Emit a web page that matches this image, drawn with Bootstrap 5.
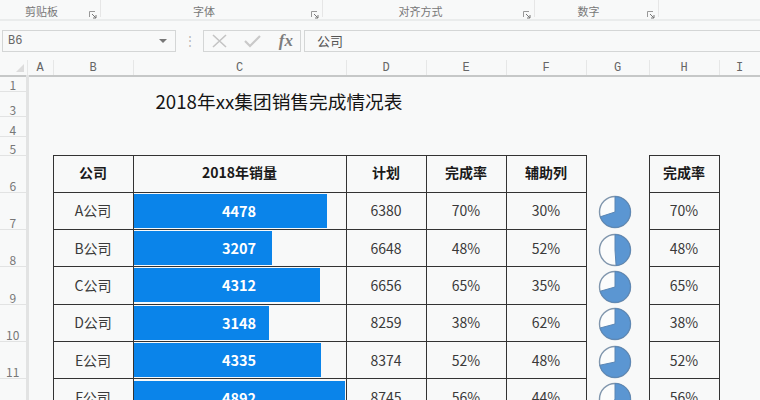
<!DOCTYPE html>
<html lang="zh-CN">
<head>
  <meta charset="UTF-8">
  <meta name="viewport" content="width=device-width, initial-scale=1.0">
  <title>2018年xx集团销售完成情况表</title>
  <link href="https://cdn.jsdelivr.net/npm/bootstrap@5.3.0/dist/css/bootstrap.min.css" rel="stylesheet">
  <style>
    html, body { height: 400px; overflow: hidden; }
    body { background: #f8f9f9; color: #3a3a3a; font-family: "Noto Sans CJK SC", "Liberation Sans", sans-serif; font-size: 14px; }
    .ribbon { height: 21px; border-bottom: 2px solid #eaecec; }
    .rib-group { position: relative; height: 17px; border-right: 1px solid #e6e6e6; font-size: 11px; line-height: 22px; color: #777; text-align: center; }
    .rib-group svg { position: absolute; right: 3px; top: 11px; }
    .rib-1 { width: 101px; padding-right: 17px; }
    .rib-2 { width: 222px; padding-right: 15px; }
    .rib-3 { width: 212px; padding-right: 16px; }
    .rib-4 { width: 124px; padding-right: 16px; }
    .fbar { height: 22px; margin-top: 9px; margin-bottom: 8px; }
    .name-box { width: 174px; margin-left: 2px; border: 1px solid #d4d6d6; font: 12px/20px "Liberation Mono", monospace; color: #666; padding: 0 5px; }
    .name-box svg { margin-right: 3px; }
    .fbar-dots { width: 27px; color: #b5b5b5; font-size: 12px; line-height: 20px; text-align: center; }
    .fbar-btns { width: 98px; border: 1px solid #d4d6d6; padding: 0 7px 0 8px; }
    .fx-mark { font: italic bold 17px/20px "Liberation Serif", serif; color: #7d7d7d; }
    .fbar-input { margin-left: 3px; border: 1px solid #d4d6d6; border-right: 0; padding-left: 12px; font-size: 13px; line-height: 19px; color: #555; }
    .sheet { table-layout: fixed; width: 760px; }
    .sheet td, .sheet th { padding: 0; text-align: center; vertical-align: middle; font-weight: 400; overflow: visible; white-space: nowrap; }
    .sheet .col-head th { height: 16px; font: 12px/13px "Liberation Mono", monospace; color: #666; border-bottom: 2px solid #c6c8c8; border-right: 1px solid #e6e7e7; vertical-align: bottom; }
    .col-head .corner { position: relative; }
    .corner svg { position: absolute; left: 16px; top: 4px; }
    .sheet .row-no { font-size: 12px; line-height: 13px; color: #777; border-bottom: 1px solid #e2e3e3; border-right: 3px solid #e2e3e3; vertical-align: bottom; }
    .h-1 { height: 15px; } .h-3 { height: 25px; } .h-4 { height: 20px; } .h-5 { height: 19px; } .h-6 { height: 37px; } .h-7 { height: 37.4px; }
    .sheet .title-cell { font-size: 18.7px; line-height: 20px; color: #151515; text-align: left; padding: 0 0 5px 127px; }
    .sheet td.box, .sheet th.box { border: 1px solid #333; }
    .sheet th.box { font-weight: 700; color: #1a1a1a; font-size: 14px; line-height: 20px; padding-bottom: 3px; }
    .bar-stack { display: grid; height: 34px; margin: 0 1px 0 0; }
    .bar-stack > * { grid-area: 1 / 1; }
    .bar-fill { background: #0a84ea; justify-self: start; }
    .bar-num { color: #fff; font-weight: 700; font-size: 14.5px; line-height: 34px; }
    .sheet td.pie-cell { text-align: left; padding: 3px 0 0 11px; line-height: 0; }
    .pie-fill { fill: #5b96d2; stroke: #5a86b4; stroke-width: 1; }
    .pie-rim { fill: #fbfcfc; stroke: #8096ad; stroke-width: 1.4; }
  </style>
</head>
<body>
  <!-- ribbon group labels -->
  <div class="ribbon d-flex">
    <div class="rib-group rib-1">剪贴板<svg width="8" height="8" viewBox="0 0 8 8"><path d="M.5 6V.5H6" fill="none" stroke="#999"/><path d="M3 3l4 4M7 4v3H4" fill="none" stroke="#777"/></svg></div>
    <div class="rib-group rib-2">字体<svg width="8" height="8" viewBox="0 0 8 8"><path d="M.5 6V.5H6" fill="none" stroke="#999"/><path d="M3 3l4 4M7 4v3H4" fill="none" stroke="#777"/></svg></div>
    <div class="rib-group rib-3">对齐方式<svg width="8" height="8" viewBox="0 0 8 8"><path d="M.5 6V.5H6" fill="none" stroke="#999"/><path d="M3 3l4 4M7 4v3H4" fill="none" stroke="#777"/></svg></div>
    <div class="rib-group rib-4">数字<svg width="8" height="8" viewBox="0 0 8 8"><path d="M.5 6V.5H6" fill="none" stroke="#999"/><path d="M3 3l4 4M7 4v3H4" fill="none" stroke="#777"/></svg></div>
  </div>

  <!-- formula bar -->
  <div class="fbar d-flex">
    <div class="name-box d-flex justify-content-between align-items-center">
      <span>B6</span>
      <svg width="8" height="4" viewBox="0 0 8 4"><path d="M0 0h8L4 4z" fill="#777"/></svg>
    </div>
    <div class="fbar-dots">⋮</div>
    <div class="fbar-btns d-flex justify-content-between align-items-center">
      <svg width="15" height="14" viewBox="0 0 15 14"><path d="M1 1l13 12M14 1L1 13" fill="none" stroke="#c4c4c4" stroke-width="1.6"/></svg>
      <svg width="17" height="14" viewBox="0 0 17 14"><path d="M1 7l5 5L16 2" fill="none" stroke="#c9c9c9" stroke-width="2.2"/></svg>
      <span class="fx-mark">fx</span>
    </div>
    <div class="fbar-input flex-grow-1">公司</div>
  </div>

  <!-- sheet -->
  <table class="sheet">
    <colgroup>
      <col style="width:27px"><col style="width:26px"><col style="width:80px"><col style="width:213px"><col style="width:80px"><col style="width:80px"><col style="width:80px"><col style="width:63px"><col style="width:70px"><col style="width:41px">
    </colgroup>
    <tr class="col-head">
      <th class="corner"><svg width="8" height="8" viewBox="0 0 8 8"><path d="M8 0v8H0z" fill="#dcdcdc"/></svg></th>
      <th>A</th><th>B</th><th>C</th><th>D</th><th>E</th><th>F</th><th>G</th><th>H</th><th>I</th>
    </tr>
    <tr class="h-1"><th class="row-no">1</th><td colspan="9"></td></tr>
    <tr class="h-3"><th class="row-no">3</th><td colspan="9" class="title-cell">2018年xx集团销售完成情况表</td></tr>
    <tr class="h-4"><th class="row-no">4</th><td colspan="9"></td></tr>
    <tr class="h-5"><th class="row-no">5</th><td colspan="9"></td></tr>
    <tr class="h-6">
      <th class="row-no">6</th><td></td>
      <th class="box">公司</th><th class="box">2018年销量</th><th class="box">计划</th><th class="box">完成率</th><th class="box">辅助列</th>
      <td></td><th class="box">完成率</th><td></td>
    </tr>
    <tr class="h-7">
      <th class="row-no">7</th><td></td><td class="box">A公司</td>
      <td class="box"><div class="bar-stack"><div class="bar-fill" style="width:193px"></div><div class="bar-num">4478</div></div></td>
      <td class="box">6380</td><td class="box">70%</td><td class="box">30%</td>
      <td class="pie-cell"><svg width="34" height="34" viewBox="0 0 34 34"><circle class="pie-rim" cx="17" cy="17" r="15.5"/><path class="pie-fill" d="M17 17V1.5A15.5 15.5 0 1 1 2.26 21.79z"/></svg></td>
      <td class="box">70%</td><td></td>
    </tr>
    <tr class="h-7">
      <th class="row-no">8</th><td></td><td class="box">B公司</td>
      <td class="box"><div class="bar-stack"><div class="bar-fill" style="width:138px"></div><div class="bar-num">3207</div></div></td>
      <td class="box">6648</td><td class="box">48%</td><td class="box">52%</td>
      <td class="pie-cell"><svg width="34" height="34" viewBox="0 0 34 34"><circle class="pie-rim" cx="17" cy="17" r="15.5"/><path class="pie-fill" d="M17 17V1.5A15.5 15.5 0 0 1 18.08 32.46z"/></svg></td>
      <td class="box">48%</td><td></td>
    </tr>
    <tr class="h-7">
      <th class="row-no">9</th><td></td><td class="box">C公司</td>
      <td class="box"><div class="bar-stack"><div class="bar-fill" style="width:186px"></div><div class="bar-num">4312</div></div></td>
      <td class="box">6656</td><td class="box">65%</td><td class="box">35%</td>
      <td class="pie-cell"><svg width="34" height="34" viewBox="0 0 34 34"><circle class="pie-rim" cx="17" cy="17" r="15.5"/><path class="pie-fill" d="M17 17V1.5A15.5 15.5 0 1 1 2.1 21.27z"/></svg></td>
      <td class="box">65%</td><td></td>
    </tr>
    <tr class="h-7">
      <th class="row-no">10</th><td></td><td class="box">D公司</td>
      <td class="box"><div class="bar-stack"><div class="bar-fill" style="width:135px"></div><div class="bar-num">3148</div></div></td>
      <td class="box">8259</td><td class="box">38%</td><td class="box">62%</td>
      <td class="pie-cell"><svg width="34" height="34" viewBox="0 0 34 34"><circle class="pie-rim" cx="17" cy="17" r="15.5"/><path class="pie-fill" d="M17 17V1.5A15.5 15.5 0 1 1 2.03 21.01z"/></svg></td>
      <td class="box">38%</td><td></td>
    </tr>
    <tr class="h-7">
      <th class="row-no">11</th><td></td><td class="box">E公司</td>
      <td class="box"><div class="bar-stack"><div class="bar-fill" style="width:187px"></div><div class="bar-num">4335</div></div></td>
      <td class="box">8374</td><td class="box">52%</td><td class="box">48%</td>
      <td class="pie-cell"><svg width="34" height="34" viewBox="0 0 34 34"><circle class="pie-rim" cx="17" cy="17" r="15.5"/><path class="pie-fill" d="M17 17V1.5A15.5 15.5 0 1 1 1.84 20.22z"/></svg></td>
      <td class="box">52%</td><td></td>
    </tr>
    <tr class="h-7">
      <th class="row-no">12</th><td></td><td class="box">F公司</td>
      <td class="box"><div class="bar-stack"><div class="bar-fill" style="width:211px"></div><div class="bar-num">4892</div></div></td>
      <td class="box">8745</td><td class="box">56%</td><td class="box">44%</td>
      <td class="pie-cell"><svg width="34" height="34" viewBox="0 0 34 34"><circle class="pie-rim" cx="17" cy="17" r="15.5"/><path class="pie-fill" d="M17 17V1.5A15.5 15.5 0 1 1 11.3 31.41z"/></svg></td>
      <td class="box">56%</td><td></td>
    </tr>
  </table>
  <script src="https://cdn.jsdelivr.net/npm/bootstrap@5.3.0/dist/js/bootstrap.bundle.min.js"></script>
</body>
</html>
